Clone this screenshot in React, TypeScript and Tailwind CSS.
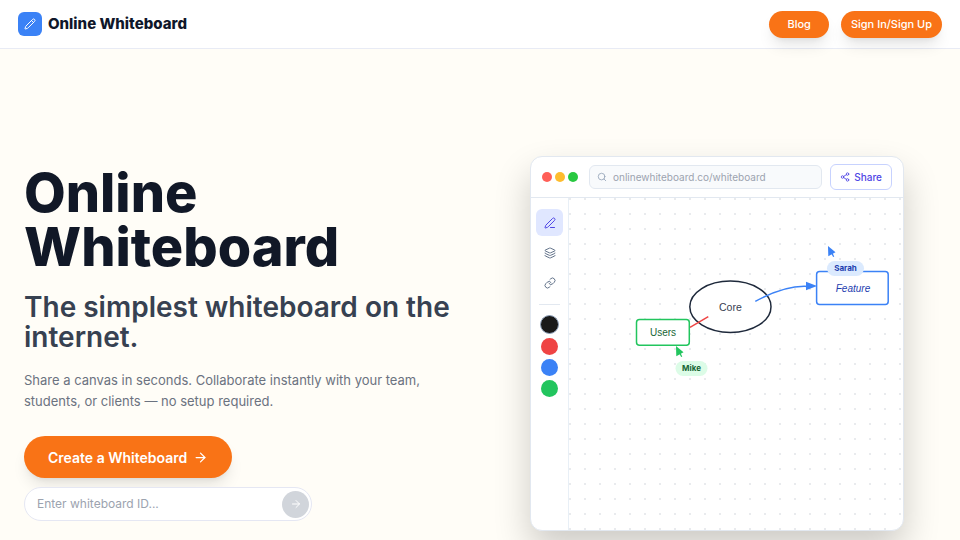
import React from 'react';
import { ArrowRight, Layers, Link, Pencil, PenLine, Search, Share2 } from 'lucide-react';

const swatches = [
  { name: 'Black', className: 'size-[19px] bg-[#1a1a1a] border border-slate-400' },
  { name: 'Red', className: 'size-[17px] bg-[#ef4444]' },
  { name: 'Blue', className: 'size-[17px] bg-[#3b82f6]' },
  { name: 'Green', className: 'size-[17px] bg-[#22c55e]' },
];

function Header() {
  return (
    <header className="flex h-[49px] items-center justify-between border-b border-[#e8ebf5] bg-white px-[18px]">
      <a href="#" className="flex items-center gap-1.5">
        <span className="flex size-6 items-center justify-center rounded-md bg-[#3b82f6] text-white">
          <Pencil size={12} strokeWidth={2} />
        </span>
        <span className="text-[15px] font-extrabold text-[#0f172a]">Online Whiteboard</span>
      </a>
      <nav className="flex items-center gap-3 text-[11px] font-medium text-white">
        <a href="#blog" className="flex h-[27px] items-center rounded-full bg-[#f97316] px-[18px] shadow-lg">
          Blog
        </a>
        <a href="#signin" className="flex h-[27px] items-center rounded-full bg-[#f97316] px-2.5 shadow-lg">
          Sign In/Sign Up
        </a>
      </nav>
    </header>
  );
}

function Intro() {
  return (
    <div>
      <h1 className="text-[54px] leading-[54px] font-extrabold text-[#111827]">Online Whiteboard</h1>
      <h2 className="mt-[18px] text-[28px] leading-[30px] font-semibold text-[#374151]">
        The simplest whiteboard on the internet.
      </h2>
      <p className="mt-[18px] text-[13px] leading-[21px] text-[#6b7280]">
        Share a canvas in seconds. Collaborate instantly with your team, students, or clients — no setup required.
      </p>
      <button
        type="button"
        className="mt-6 flex h-[42px] items-center gap-1.5 rounded-full bg-[#f97316] px-6 text-[14px] font-semibold text-white shadow-lg"
      >
        Create a Whiteboard
        <ArrowRight size={15} strokeWidth={2} />
      </button>
      <form className="mt-[9px] flex h-[34px] w-72 max-w-full items-center rounded-full border border-[#e5e7f3] bg-white pr-0.5 pl-3">
        <input
          type="text"
          aria-label="Whiteboard ID"
          placeholder="Enter whiteboard ID..."
          className="min-w-0 flex-1 bg-transparent text-[12px] outline-none placeholder:text-[#9ca3af]"
        />
        <button
          type="button"
          aria-label="Join whiteboard"
          className="flex size-[27px] items-center justify-center rounded-full bg-[#d1d5db] text-white"
        >
          <ArrowRight size={12} strokeWidth={2} />
        </button>
      </form>
    </div>
  );
}

function Toolbar() {
  return (
    <div className="flex h-[41px] items-center border-b border-[#e2e8f0] px-[11px]">
      <div className="flex gap-[3px]">
        <span className="size-2.5 rounded-full bg-[#ff5f57]" />
        <span className="size-2.5 rounded-full bg-[#febc2e]" />
        <span className="size-2.5 rounded-full bg-[#28c840]" />
      </div>
      <div className="mr-2 ml-[11px] flex h-6 flex-1 items-center gap-1.5 rounded-md border border-[#e2e8f0] bg-[#f8fafc] px-[7px] text-[10px] text-[#9ca3af]">
        <Search size={10} strokeWidth={2} className="text-[#94a3b8]" />
        onlinewhiteboard.co/whiteboard
      </div>
      <button
        type="button"
        className="flex h-[26px] items-center gap-1 rounded-md border border-[#c7d2fe] px-[9px] text-[10px] font-medium text-[#4f46e5]"
      >
        <Share2 size={10} strokeWidth={2} />
        Share
      </button>
    </div>
  );
}

function Sidebar() {
  return (
    <div className="flex w-[38px] flex-col items-center border-r border-[#e8eff6] pt-[11px]">
      <div className="flex flex-col gap-[3px] text-[#64748b]">
        <button
          type="button"
          aria-label="Draw"
          className="flex size-[27px] items-center justify-center rounded-md bg-[#e0e7ff] text-[#4f46e5]"
        >
          <PenLine size={12} />
        </button>
        <button type="button" aria-label="Layers" className="flex size-[27px] items-center justify-center">
          <Layers size={12} />
        </button>
        <button type="button" aria-label="Link" className="flex size-[27px] items-center justify-center">
          <Link size={12} />
        </button>
      </div>
      <span className="mt-2 h-px w-[21px] bg-[#e2e8f0]" />
      <div className="mt-2.5 flex flex-col items-center gap-1">
        {swatches.map((s) => (
          <button key={s.name} type="button" aria-label={s.name} className={`rounded-full ${s.className}`} />
        ))}
      </div>
    </div>
  );
}

// Collaborator cursor, drawn with its tip at the origin
function Cursor({ x, y, color }: { x: number; y: number; color: string }) {
  return (
    <g transform={`translate(${x} ${y})`} fill={color}>
      <path d="M0 0 .3 10.2 7.5 6.3Z" />
      <path d="M3.5 6.5 5.7 10.8" stroke={color} strokeWidth="1.3" />
    </g>
  );
}

// Sample drawing shown on the dotted canvas
function Board() {
  return (
    <div className="flex-1 bg-[radial-gradient(circle_at_1px_1px,#e9ebee_1px,transparent_1px)] bg-[size:15px_15px]">
      <svg viewBox="0 0 334 332" className="block w-full" fontFamily="'Liberation Sans', Arial, sans-serif" fontSize="10.5">
        <ellipse cx="161.4" cy="108.7" rx="40.6" ry="25.7" fill="white" stroke="#1e293b" strokeWidth="1.5" />
        <text x="161.4" y="113" textAnchor="middle" fill="#374151">Core</text>
        <path d="M121 129.3 139.3 118.6" stroke="#ef4444" strokeWidth="1.5" fill="none" />
        <rect x="67.5" y="121.6" width="52.8" height="25.6" rx="3" fill="white" stroke="#22c55e" strokeWidth="1.5" />
        <text x="94" y="138" textAnchor="middle" fontSize="10" fill="#166534">Users</text>
        <path d="M186.3 103.3Q217 87 239 88.5" stroke="#3b82f6" strokeWidth="1.5" fill="none" />
        <path d="M237 83.7 248 88 237 92.3Z" fill="#3b82f6" />
        <rect x="247.6" y="73.4" width="71.6" height="33.2" rx="3" fill="white" stroke="#3b82f6" strokeWidth="1.5" />
        <text x="284" y="94" textAnchor="middle" fontSize="10" fontStyle="italic" fill="#1e40af">Feature</text>
        <Cursor x={259} y={48} color="#3b82f6" />
        <Cursor x={107} y={148} color="#22c55e" />
        <g fontFamily="Inter, sans-serif" fontSize="8" fontWeight="700" textAnchor="middle">
          <rect x="258" y="63" width="37" height="15" rx="7.5" fill="#dbeafe" />
          <text x="276.5" y="73" fill="#1e40af">Sarah</text>
          <rect x="106.5" y="163" width="32" height="15" rx="7.5" fill="#dcfce7" />
          <text x="122.5" y="173" fill="#166534">Mike</text>
        </g>
      </svg>
    </div>
  );
}

export default function App() {
  return (
    <div className="min-h-screen bg-[#fffdf7] font-['Inter',sans-serif]">
      <Header />
      <main className="grid grid-cols-2 items-center gap-9 px-6 pt-[107px] pb-2">
        <Intro />
        <div className="mx-auto w-full max-w-[374px] overflow-hidden rounded-xl border border-[#e2e8f0] bg-white shadow-[0_18px_36px_rgba(0,0,0,0.2)]">
          <Toolbar />
          <div className="flex">
            <Sidebar />
            <Board />
          </div>
        </div>
      </main>
    </div>
  );
}
